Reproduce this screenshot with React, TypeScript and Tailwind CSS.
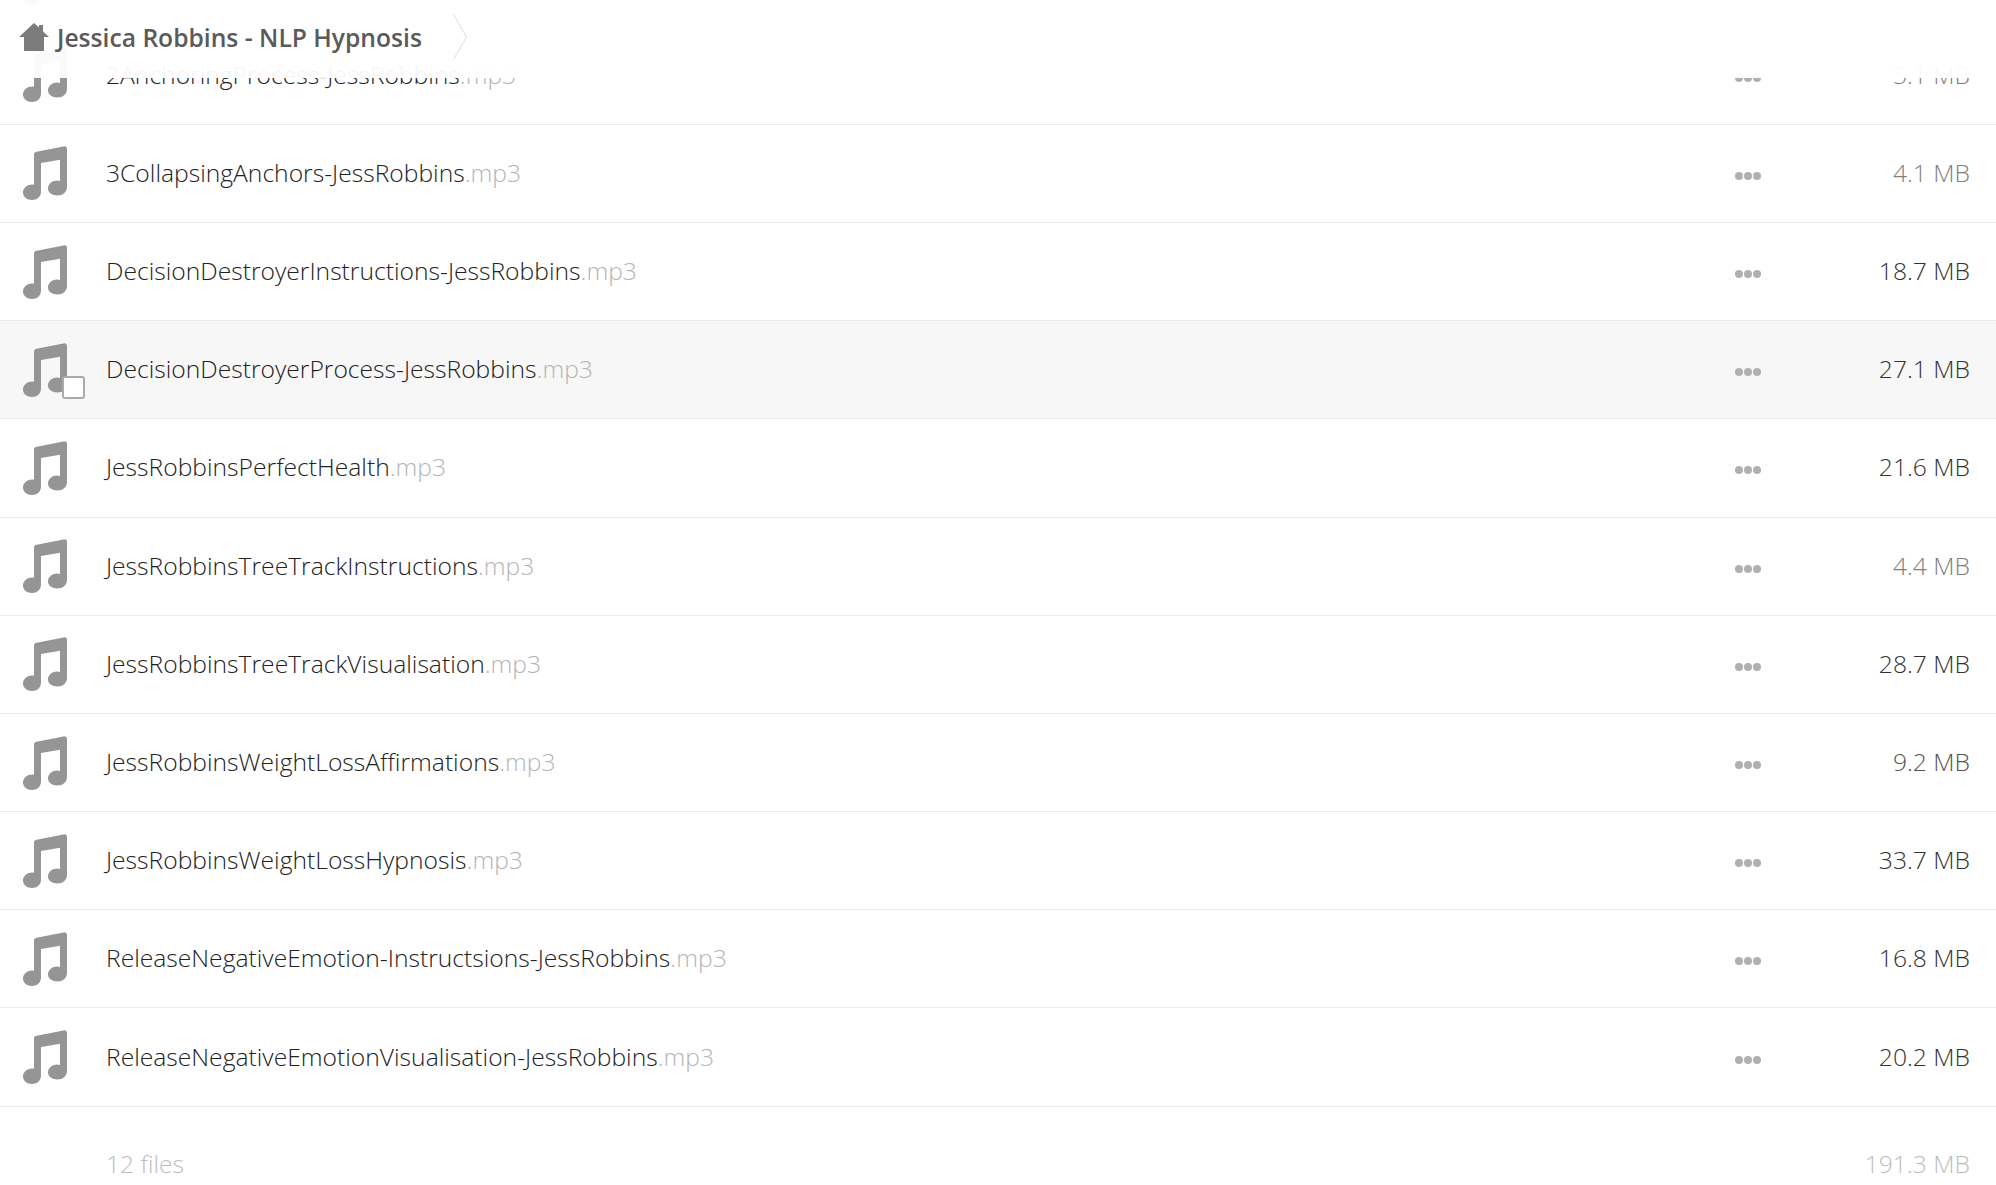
const rows = [
  { name: "1AnchoringIntro-JessRobbins", size: "6.2 MB", tone: "text-[#666666]" },
  { name: "2AnchoringProcess-JessRobbins", size: "5.1 MB", tone: "text-[#808080]" },
  { name: "3CollapsingAnchors-JessRobbins", size: "4.1 MB", tone: "text-[#808080]" },
  { name: "DecisionDestroyerInstructions-JessRobbins", size: "18.7 MB", tone: "text-[#333333]" },
  { name: "DecisionDestroyerProcess-JessRobbins", size: "27.1 MB", tone: "text-[#333333]", hover: true },
  { name: "JessRobbinsPerfectHealth", size: "21.6 MB", tone: "text-[#333333]" },
  { name: "JessRobbinsTreeTrackInstructions", size: "4.4 MB", tone: "text-[#808080]" },
  { name: "JessRobbinsTreeTrackVisualisation", size: "28.7 MB", tone: "text-[#333333]" },
  { name: "JessRobbinsWeightLossAffirmations", size: "9.2 MB", tone: "text-[#555555]" },
  { name: "JessRobbinsWeightLossHypnosis", size: "33.7 MB", tone: "text-[#333333]" },
  { name: "ReleaseNegativeEmotion-Instructsions-JessRobbins", size: "16.8 MB", tone: "text-[#333333]" },
  { name: "ReleaseNegativeEmotionVisualisation-JessRobbins", size: "20.2 MB", tone: "text-[#333333]" },
];

function NoteIcon() {
  return (
    <svg viewBox="0 0 44 54" className="w-[44px] h-[54px] fill-[#959595]">
      <path d="M11 8.5C11 7 12 6 13.5 5.7L40.5 0.4C42.5 0.1 44 1 44 3V41C44 46 39.5 49.5 34.5 49.5C29 49.5 25 46.5 25 42.5C25 38 29.5 34.5 34 34.5C35 34.5 36 34.7 37 35V13.7L18 17V45.5C18 50.5 14 54 9 54C4 54 0 51 0 46.5C0 42 4.5 38.5 9 38.5C9.5 38.5 10.5 38.6 11 38.8Z" />
    </svg>
  );
}

function Dots() {
  return (
    <div className="flex gap-[1px] mt-[5px]">
      <div className="w-2 h-2 rounded-full bg-[#b0b0b0]" />
      <div className="w-2 h-2 rounded-full bg-[#b0b0b0]" />
      <div className="w-2 h-2 rounded-full bg-[#b0b0b0]" />
    </div>
  );
}

function HomeIcon() {
  return (
    <svg viewBox="0 0 30 28" className="w-[30px] h-[28px] fill-[#7c7c7c]">
      <path d="M15 0L20 4.5V2H24V8.5L30 14H25V28H5V14H0Z" />
    </svg>
  );
}

export default function App() {
  return (
    <div className="relative h-[1185px] overflow-hidden bg-white font-['Open_Sans',sans-serif]">
      {/* header floats over the scrolled list */}
      <div className="absolute top-0 left-0 right-0 h-[78px] z-10 bg-white/95">
        <div className="flex items-center h-[74px] pl-[19px]">
          <HomeIcon />
          <span className="ml-[8px] mt-[3px] text-[24.65px] font-semibold text-[#5a5a5a]">
            Jessica Robbins - NLP Hypnosis
          </span>
          <svg viewBox="0 0 14 46" className="ml-[31px] w-[14px] h-[46px] fill-none stroke-[#dddddd]">
            <path d="M0.5 0.5L13.5 23L0.5 45.5" />
          </svg>
        </div>
      </div>

      <div className="mt-[-71.6px]">
        {rows.map((r) => (
          <div
            key={r.name}
            className={`flex items-center h-[98.2px] border-b border-[#ebebeb] ${r.hover ? "bg-[#f7f7f7]" : ""}`}
          >
            <div className="relative w-[106px] pl-[23px]">
              <NoteIcon />
              {r.hover && (
                <div className="absolute left-[62px] top-[33px] w-[23px] h-[23px] rounded-[3px] border-2 border-[#aaaaaa] bg-white" />
              )}
            </div>
            <div className="flex-1 text-[24.65px] font-light text-[#222222]">
              {r.name}
              <span className="text-[#b5b5b5]">.mp3</span>
            </div>
            <Dots />
            <div className={`w-[235px] pr-[26px] text-right text-[24.65px] font-light ${r.tone}`}>
              {r.size}
            </div>
          </div>
        ))}
      </div>

      <div className="flex items-center h-[116px] pl-[106px] pr-[26px] justify-between text-[24.65px] font-light text-[#bdbdbd]">
        <span>12 files</span>
        <span>191.3 MB</span>
      </div>
    </div>
  );
}
